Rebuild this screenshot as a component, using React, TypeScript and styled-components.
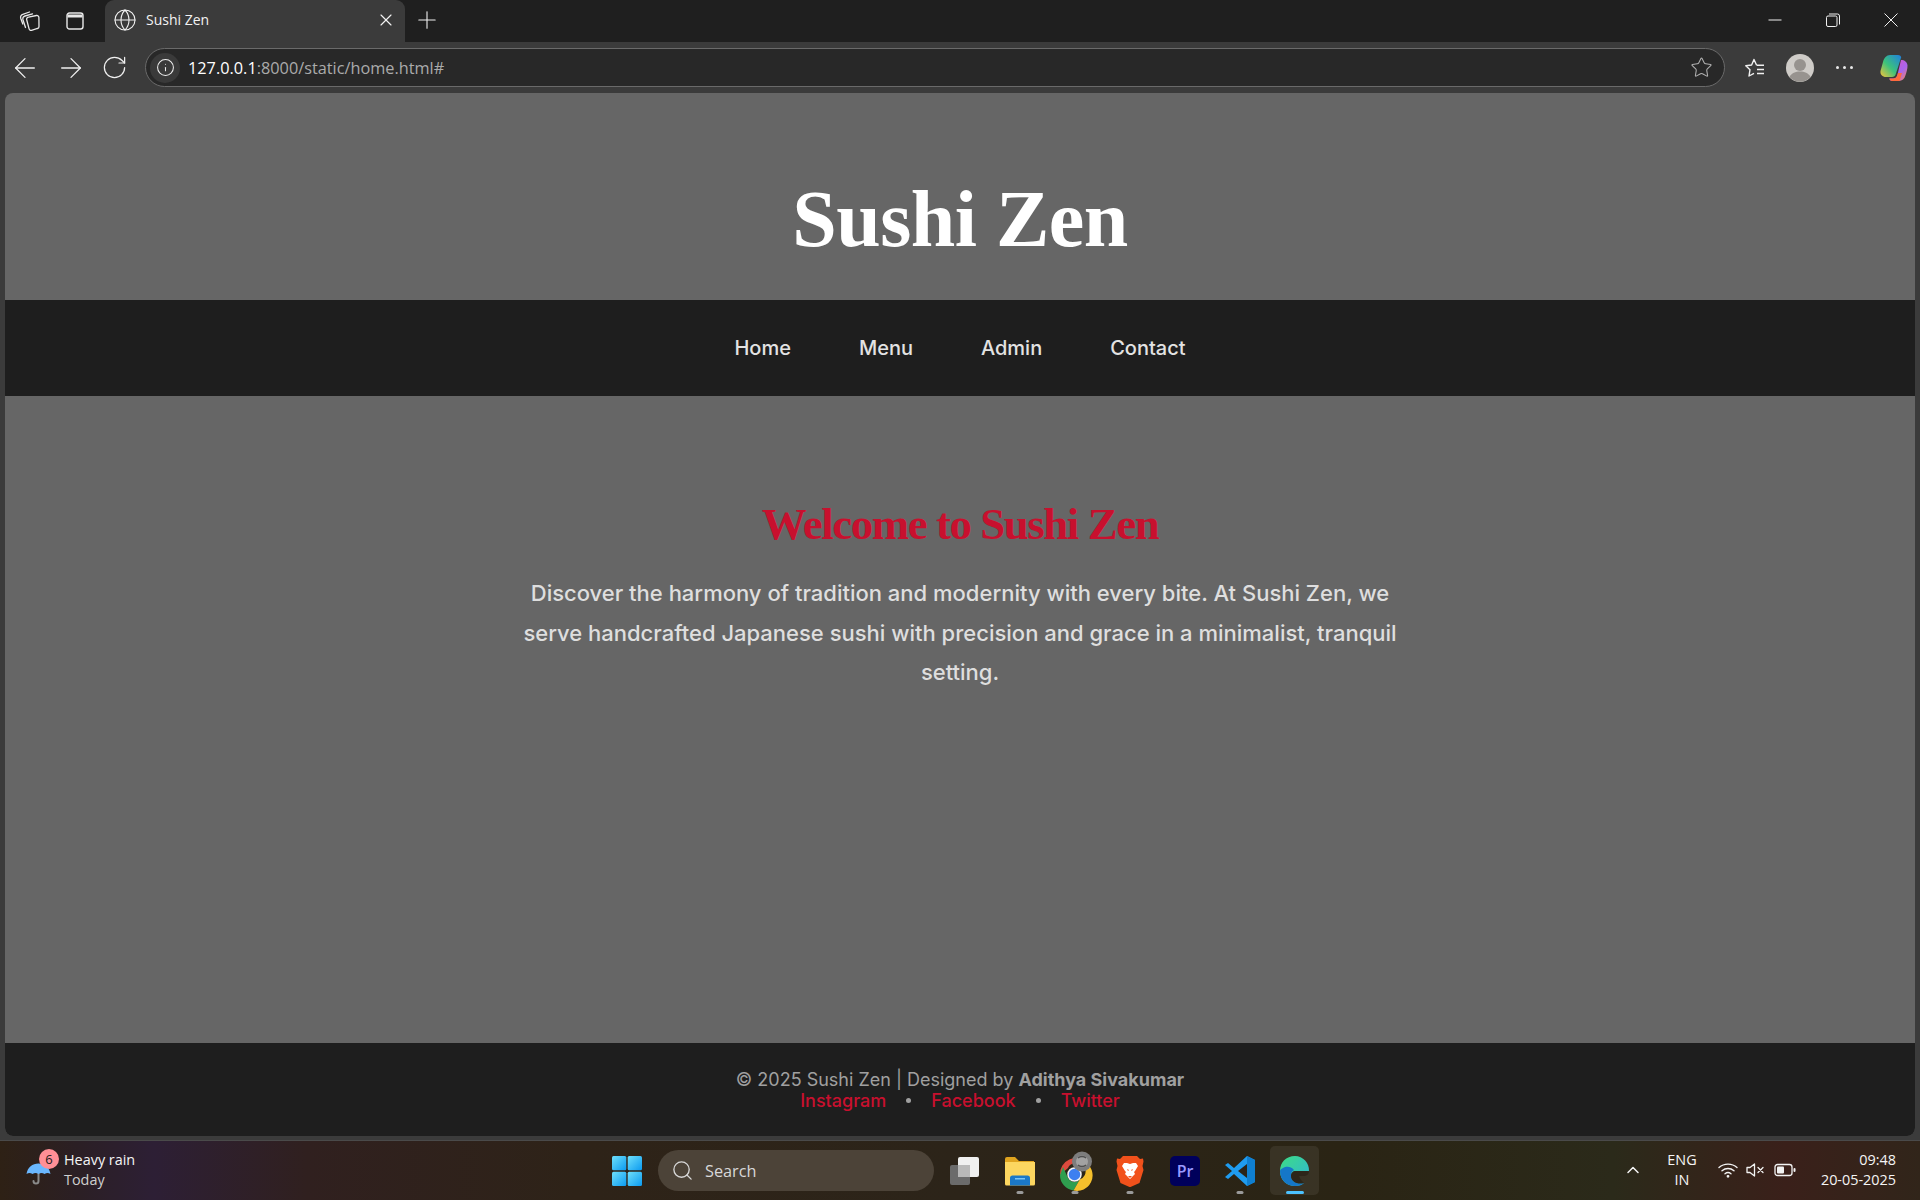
import React, { FC } from 'react'
import styled, { createGlobalStyle } from 'styled-components'
import { ArrowLeft, ArrowRight, ChevronUp, Globe, Info, Plus, RotateCw, Search, Star, X } from 'lucide-react'

const GlobalStyle = createGlobalStyle`
    html, body {
        margin: 0;
        padding: 0;
        height: 100%;
        overflow: hidden;
    }
    body {
        font-family: "Open Sans", "Noto Sans", sans-serif;
        background: #3b3b3b;
    }
    * {
        box-sizing: border-box;
    }
`

const Screen = styled.div`
    width: 1920px;
    height: 1200px;
    display: flex;
    flex-direction: column;
    overflow: hidden;
`

/* ---- browser chrome ---- */
const TabStrip = styled.div`
    height: 42px;
    flex: none;
    background: #1f1f1f;
    display: flex;
    align-items: stretch;
    color: #f0f0f0;
`
const StripIcons = styled.div`
    width: 105px;
    flex: none;
    display: flex;
    align-items: center;
    padding-left: 19px;
    gap: 25px;
`
const Tab = styled.div`
    width: 300px;
    flex: none;
    background: #3b3b3b;
    border-radius: 9px 9px 0 0;
    display: flex;
    align-items: center;
    padding: 0 9px 2px 8px;
    font-size: 14px;
    color: #f2f2f2;
`
const TabTitle = styled.span`
    flex: 1;
    margin: 0 0 2px 9px;
`
const NewTab = styled.div`
    width: 43px;
    flex: none;
    display: flex;
    align-items: center;
    justify-content: center;
    padding-bottom: 3px;
`
const WindowButtons = styled.div`
    margin-left: auto;
    display: flex;
    align-items: center;
    padding: 0 22px 2px 0;
    gap: 44px;
`

const Toolbar = styled.div`
    height: 51px;
    flex: none;
    background: #3b3b3b;
    display: flex;
    align-items: center;
    padding: 0 0 0 9px;
    color: #f0f0f0;
`
const NavIcons = styled.div`
    display: flex;
    align-items: center;
    gap: 14px;
    width: 136px;
    flex: none;
`
const AddressBar = styled.div`
    width: 1580px;
    height: 39px;
    flex: none;
    border: 1px solid #6a6a6a;
    border-radius: 20px;
    background: #282828;
    display: flex;
    align-items: center;
    padding: 0 11px 0 4px;
    font-size: 16.3px;
`
const InfoBadge = styled.div`
    width: 30px;
    height: 30px;
    border-radius: 50%;
    background: #3a3a3a;
    display: flex;
    align-items: center;
    justify-content: center;
    flex: none;
`
const Url = styled.span`
    flex: 1;
    margin-left: 8px;
    color: #ababab;
`
const Host = styled.span`
    color: #ffffff;
`
const ToolbarRight = styled.div`
    flex: 1;
    display: flex;
    align-items: center;
    gap: 20px;
    padding-left: 19px;
`
const Avatar = styled.div`
    width: 28px;
    height: 28px;
    flex: none;
`
const Dots = styled.div`
    display: flex;
    gap: 4px;
    width: 17px;
    flex: none;
    margin: 0 7px 0 2px;
    & > i {
        width: 3px;
        height: 3px;
        border-radius: 50%;
        background: #e8e8e8;
    }
`

/* ---- page ---- */
const Viewport = styled.div`
    flex: 1;
    min-height: 0;
    padding: 0 5px 4px;
    background: #3b3b3b;
`
const Page = styled.div`
    height: 100%;
    border-radius: 8px;
    overflow: hidden;
    background: #666666;
    display: flex;
    flex-direction: column;
`
const Header = styled.header`
    height: 207px;
    flex: none;
    display: flex;
    justify-content: center;
    padding-top: 95px;
`
const Title = styled.h1`
    margin: 0;
    font-family: "Liberation Serif", "DejaVu Serif", serif;
    font-weight: 700;
    font-size: 80px;
    line-height: 62px;
    letter-spacing: -0.5px;
    color: #ffffff;
`
const Nav = styled.nav`
    height: 96px;
    flex: none;
    background: #1e1e1e;
    display: flex;
    justify-content: center;
    align-items: center;
    gap: 68px;
`
const NavLink = styled.a`
    font-family: Inter, "Liberation Sans", sans-serif;
    font-weight: 500;
    font-size: 20px;
    color: #e3e3e3;
    text-decoration: none;
`
const Main = styled.main`
    flex: 1;
    display: flex;
    flex-direction: column;
    align-items: center;
    padding-top: 101px;
`
const Welcome = styled.h2`
    margin: 0;
    font-family: "Liberation Serif", serif;
    font-weight: 700;
    font-size: 44.8px;
    line-height: 54px;
    letter-spacing: -1.4px;
    color: #c8102e;
`
const Intro = styled.p`
    margin: 23px 0 0;
    width: 900px;
    text-align: center;
    font-family: Inter, "Liberation Sans", sans-serif;
    font-weight: 500;
    font-size: 22px;
    line-height: 39.6px;
    color: #dedede;
`
const Footer = styled.footer`
    height: 93px;
    flex: none;
    background: #1e1e1e;
    padding-top: 26px;
    text-align: center;
    font-family: Inter, "Liberation Sans", sans-serif;
    font-size: 18px;
    line-height: 21px;
    color: #a0a0a0;
`
const FooterLinks = styled.div`
    display: flex;
    justify-content: center;
    align-items: center;
    gap: 20px;
`
const FooterLink = styled.a`
    color: #c8102e;
    font-weight: 500;
    text-decoration: none;
`
const Bullet = styled.span`
    width: 5px;
    height: 5px;
    border-radius: 50%;
    background: #a0a0a0;
`

/* ---- taskbar ---- */
const Taskbar = styled.div`
    height: 60px;
    flex: none;
    border-top: 1px solid #4a4a4a;
    background: linear-gradient(90deg, #2e2115 0%, #2b1f24 4%, #2d1f35 8%, #30201f 16%, #2e2318 30%, #2c2419 50%, #2a2414 70%, #2b2a1a 84%, #3a201a 93%, #31251a 100%);
    display: grid;
    grid-template-columns: 1fr auto 1fr;
    align-items: center;
    color: #f5f5f5;
`
const Weather = styled.div`
    display: flex;
    align-items: center;
    padding: 0 0 2px 26px;
`
const WeatherIcon = styled.div`
    position: relative;
    width: 38px;
    height: 40px;
    flex: none;
    padding-top: 13px;
`
const Badge = styled.span`
    position: absolute;
    left: 13px;
    top: -1px;
    width: 20px;
    height: 20px;
    border-radius: 50%;
    background: #ff8f96;
    color: #1a1a1a;
    font-size: 13px;
    line-height: 20px;
    text-align: center;
`
const TwoLines = styled.div`
    font-size: 14.4px;
    line-height: 20px;
`
const Muted = styled.div`
    color: #cfcfcf;
`
const TaskCentre = styled.div`
    display: flex;
    align-items: center;
    height: 100%;
    padding-left: 14px;
`
const SearchBox = styled.div`
    width: 276px;
    height: 41px;
    border-radius: 21px;
    margin: 0 3px 0 16px;
    background: #4c4338;
    display: flex;
    align-items: center;
    padding-left: 13px;
    gap: 11px;
    font-size: 16.3px;
    color: #d8d8d8;
`
const AppSlot = styled.div<{ $open?: boolean; $active?: boolean }>`
    width: 55px;
    height: 49px;
    position: relative;
    display: flex;
    align-items: center;
    justify-content: center;
    &::before {
        content: '';
        display: ${p => (p.$active ? 'block' : 'none')};
        position: absolute;
        inset: 0 3px;
        border-radius: 5px;
        background: rgba(255, 255, 255, 0.07);
    }
    & > svg {
        position: relative;
    }
    &::after {
        content: '';
        display: ${p => (p.$open || p.$active ? 'block' : 'none')};
        position: absolute;
        bottom: 1px;
        left: 50%;
        transform: translateX(-50%);
        width: ${p => (p.$active ? '18px' : '7px')};
        height: 3px;
        border-radius: 2px;
        background: ${p => (p.$active ? '#4cc2ff' : '#9a9a9a')};
    }
`
const Tray = styled.div`
    justify-self: end;
    display: flex;
    align-items: center;
    padding: 0 24px 2px 0;
    font-size: 14.4px;
    line-height: 20px;
`
const Lang = styled.div`
    text-align: center;
    width: 44px;
    margin-left: 17px;
`
const TrayIcons = styled.div`
    display: flex;
    align-items: center;
    gap: 8px;
    margin-left: 14px;
`
const Clock = styled.div`
    text-align: right;
    margin-left: 18px;
    width: 82px;
`

const WorkspacesIcon: FC = () => (
    <svg width="22" height="22" viewBox="0 0 22 22" fill="none" stroke="#e8e8e8" strokeWidth="1.3" strokeLinecap="round">
        <path d="M9.500 7.200 17.500 5.500a2 2 0 0 1 2.400 2L20 16.500a2 2 0 0 1-1.500 2L12.500 20.300A2 2 0 0 1 10 18.500L7.700 9.800a2 2 0 0 1 1.800-2.600Z" />
        <path d="M6.500 17.500 4 10C3.500 8 4.200 6.500 6 6l7.500-2.200" />
        <path d="M3.800 14 1.800 8.500C1.200 6.500 2 5 3.800 4.300L10.500 2" />
    </svg>
)
const TabsIcon: FC = () => (
    <svg width="18" height="18" viewBox="0 0 18 18" fill="none" stroke="#e8e8e8" strokeWidth="1.4">
        <rect x="1" y="1" width="16" height="16" rx="2.500" />
        <path d="M1.500 2.500h15V5.500h-15Z" fill="#e8e8e8" stroke="none" />
    </svg>
)
const MinimizeIcon: FC = () => (
    <svg width="14" height="14" viewBox="0 0 14 14"><rect x="0.500" y="6.500" width="13" height="1" fill="#f0f0f0" /></svg>
)
const RestoreIcon: FC = () => (
    <svg width="14" height="14" viewBox="0 0 14 14" fill="none" stroke="#f0f0f0" strokeWidth="1">
        <rect x="0.500" y="3" width="10.500" height="10.500" rx="1.500" />
        <path d="M3 1h8.500A2 2 0 0 1 13.500 3v8.500" />
    </svg>
)
const CloseIcon: FC = () => (
    <svg width="14" height="14" viewBox="0 0 14 14" fill="none" stroke="#f0f0f0" strokeWidth="1">
        <path d="M0.500 0.500l13 13M13.500 0.500l-13 13" />
    </svg>
)
const FavouritesIcon: FC = () => (
    <svg width="22" height="22" viewBox="0 0 22 22" fill="none" stroke="#f0f0f0" strokeWidth="1.400">
        <path d="M12.500 8 10 2.500 7.600 8 1.800 8.800 6 12.700 5 19l5-2.600" strokeLinejoin="round" />
        <path d="M12.500 8.200H20M13 12.500h7M13 16.500h7" />
    </svg>
)
const CopilotIcon: FC = () => (
    <svg width="28" height="28" viewBox="0 0 28 28">
        <defs>
            <linearGradient id="cpA" x1="0" y1="1" x2="1" y2="0">
                <stop offset="0" stopColor="#f5c33b" />
                <stop offset="0.45" stopColor="#3cc27b" />
                <stop offset="1" stopColor="#1f7fe0" />
            </linearGradient>
            <linearGradient id="cpB" x1="0" y1="0" x2="1" y2="1">
                <stop offset="0" stopColor="#e84fb0" />
                <stop offset="0.6" stopColor="#a765f0" />
                <stop offset="1" stopColor="#ff8a4a" />
            </linearGradient>
        </defs>
        <path d="M10 1h8c1.600 0 2.700.7 3.200 2.200l-5.500 17c-.6 1.800-1.700 2.800-3.700 2.800H6C2.500 23 0 20.500.5 17L3 8C4 4 6.500 1 10 1Z" fill="url(#cpA)" />
        <path d="M21 6c3.500 0 6.300 2 6.500 5.500.1 3-1 7-2 9.800C24.500 25 22 27 19 27h-7c-1.500 0-2.500-1.200-2.700-2.500h4c2 0 3.300-1 4-3L21 6Z" fill="url(#cpB)" />
        <path d="M9.500 24.500h3.700c2 0 3.300-1 4-3l.8-2.500h4l-2.500 8H12c-1.500 0-2.300-1.200-2.500-2.500Z" fill="#ff6a3c" />
    </svg>
)
const UmbrellaIcon: FC = () => (
    <svg width="25" height="22" viewBox="0 0 25 22">
        <path d="M12.500 9v9a2.500 2.500 0 0 1-5 0" fill="none" stroke="#8a8a8a" strokeWidth="2" strokeLinecap="round" />
        <path d="M0.500 11C1.500 4.500 6.500 0.500 12.500 0.500S23.500 4.500 24.500 11c-2-1.400-4-1.400-6 0-2-1.400-4-1.400-6 0-2-1.400-4-1.400-6 0-2-1.400-4-1.400-6 0Z" fill="#6ab7ff" />
    </svg>
)
const WindowsLogo: FC = () => (
    <svg width="30" height="30" viewBox="0 0 30 30">
        <defs>
            <linearGradient id="winL" x1="0" y1="0" x2="1" y2="1">
                <stop offset="0" stopColor="#6fe0fb" />
                <stop offset="1" stopColor="#0b9af0" />
            </linearGradient>
        </defs>
        <rect x="0" y="0" width="14.300" height="14.300" rx="1.500" fill="url(#winL)" />
        <rect x="15.700" y="0" width="14.300" height="14.300" rx="1.500" fill="url(#winL)" />
        <rect x="0" y="15.700" width="14.300" height="14.300" rx="1.500" fill="url(#winL)" />
        <rect x="15.700" y="15.700" width="14.300" height="14.300" rx="1.500" fill="url(#winL)" />
    </svg>
)
const TaskViewIcon: FC = () => (
    <svg width="32" height="30" viewBox="0 0 32 30">
        <rect x="9" y="1" width="21" height="20" rx="2" fill="#f0f0f0" />
        <rect x="1" y="9" width="20" height="20" rx="2" fill="#6b6b6b" />
        <rect x="9" y="9" width="12" height="12" fill="#b9b9b9" />
    </svg>
)
const FolderIcon: FC = () => (
    <svg width="32" height="30" viewBox="0 0 32 30">
        <path d="M1 3a2 2 0 0 1 2-2h8l4 4h15v4H1Z" fill="#e0a41f" />
        <path d="M1 6h30v22a1.500 1.500 0 0 1-1.500 1.500h-27A1.500 1.500 0 0 1 1 28Z" fill="#fcd660" />
        <path d="M6 29.500V22a2.500 2.500 0 0 1 2.500-2.500h15A2.500 2.500 0 0 1 26 22v7.500Z" fill="#1b78c8" />
        <rect x="11" y="22" width="10" height="1.500" fill="#7cc4f5" />
    </svg>
)
const ChromeIcon: FC = () => (
    <svg width="44" height="44" viewBox="0 0 44 44">
        <path d="M7 26a15.500 15.500 0 0 1 27-11.500H21.500a7 7 0 0 0-6.500 4.500Z" fill="#dd4b3e" />
        <path d="M7 26a15.500 15.500 0 0 0 13.500 15.500l6.300-11a7 7 0 0 1-11.800-1.500L10 18Z" fill="#2f9e4f" />
        <path d="M20.500 41.500A15.500 15.500 0 0 0 34 14.500H21.500a7 7 0 0 1 5.300 16Z" fill="#f6c02c" />
        <circle cx="21.500" cy="25.500" r="6.500" fill="#3d7ff0" stroke="#f4f4f4" strokeWidth="1.500" />
        <circle cx="29" cy="12.500" r="10" fill="#7d7d7d" />
        <circle cx="29" cy="12.500" r="6" fill="#a2a2a2" />
        <path d="M25 9c2-2 6-2 8 0M25 16c2 2 6 2 8 0" stroke="#4f4f4f" strokeWidth="1.500" fill="none" />
    </svg>
)
const BraveIcon: FC = () => (
    <svg width="28" height="32" viewBox="0 0 28 32">
        <path d="M7 1h14l3 3 3-.500.500 3L26.500 11l1 4-4 13-9 4-1 0-9-4-4-13 1-4L.5 6.500 1 3.500l3 .5Z" fill="#f1511b" />
        <path d="M8 8h3l3 1 3-1h3l2 3-3 5-1 1 1 2-2 2-3 3-3-3-2-2 1-2-1-1-3-5Z" fill="#fff" />
        <path d="M11 14l2 1-1 1ZM17 14l-2 1 1 1ZM12 21h4l-2 2Z" fill="#f1511b" />
    </svg>
)
const PremiereIcon: FC = () => (
    <svg width="30" height="30" viewBox="0 0 30 30">
        <rect width="30" height="30" rx="5" fill="#00005b" />
        <text x="15" y="21" textAnchor="middle" fontFamily="Open Sans, sans-serif" fontWeight="600" fontSize="16" fill="#9999ff">Pr</text>
    </svg>
)
const VsCodeIcon: FC = () => (
    <svg width="32" height="32" viewBox="0 0 32 32">
        <path d="M23 1 31 5v22l-8 4L10 19l-6 5-3-2 7-6-7-6 3-2 6 5Z" fill="#1f9cf0" />
        <path d="M23 1 31 5v22l-8 4Z" fill="#0f7fd0" />
        <path d="M23 9l-9 7 9 7Z" fill="#2b2419" />
    </svg>
)
const EdgeIcon: FC = () => (
    <svg width="32" height="32" viewBox="0 0 32 32">
        <defs>
            <linearGradient id="edgeG" x1="0" y1="0" x2="1" y2="1">
                <stop offset="0" stopColor="#3ddc84" />
                <stop offset="1" stopColor="#2fb5d8" />
            </linearGradient>
        </defs>
        <path d="M16 1C7 1 1 7.500 1 16c0 9 7 15 15 15 4 0 7-1 9-3-6 2-13-1-13-7 0-3 2-5 5-5h13c.5-8-6-15-14-15Z" fill="url(#edgeG)" />
        <path d="M1 16c0 9 7 15 15 15 4 0 7-1 9-3-6 2-13-1-13-7 0-3 1-5 3-6-3-4-8-4-11-2-2 1-3 2-3 3Z" fill="#1577c8" />
        <path d="M12 21c0-3 2-5 5-5h13c0 3-2 5-6 5h-4c1 3 3 5 5 7-6 2-13-1-13-7Z" fill="#2b2419" opacity="0.85" />
    </svg>
)
const WifiIcon: FC = () => (
    <svg width="20" height="16" viewBox="0 0 20 16" fill="none" stroke="#f2f2f2" strokeWidth="1.400" strokeLinecap="round">
        <path d="M1 5.500C6 1 14 1 19 5.500" />
        <path d="M4 8.700C7.500 5.700 12.500 5.700 16 8.700" />
        <path d="M7 11.700C8.800 10.300 11.200 10.300 13 11.700" />
        <circle cx="10" cy="14.300" r="0.700" fill="#f2f2f2" />
    </svg>
)
const MutedIcon: FC = () => (
    <svg width="20" height="16" viewBox="0 0 20 16" fill="none" stroke="#f2f2f2" strokeWidth="1.300" strokeLinejoin="round">
        <path d="M1 5.500h3L8.500 2v12L4 10.500H1Z" />
        <path d="M12 5.500l5 5M17 5.500l-5 5" strokeLinecap="round" />
    </svg>
)
const BatteryIcon: FC = () => (
    <svg width="22" height="14" viewBox="0 0 22 14" fill="none">
        <rect x="1" y="1.500" width="17" height="11" rx="2.500" stroke="#f2f2f2" strokeWidth="1.300" />
        <rect x="3" y="3.500" width="7" height="7" rx="1" fill="#f2f2f2" />
        <rect x="19.500" y="5" width="2" height="4" rx="1" fill="#f2f2f2" />
    </svg>
)

const App: FC = () => {
    const navItems = ['Home', 'Menu', 'Admin', 'Contact']
    return (
        <Screen>
            <GlobalStyle />
            <TabStrip>
                <StripIcons>
                    <WorkspacesIcon />
                    <TabsIcon />
                </StripIcons>
                <Tab>
                    <Globe size={24} strokeWidth={1.1} />
                    <TabTitle>Sushi Zen</TabTitle>
                    <X size={20} strokeWidth={1.4} />
                </Tab>
                <NewTab>
                    <Plus size={28} strokeWidth={0.95} />
                </NewTab>
                <WindowButtons>
                    <MinimizeIcon />
                    <RestoreIcon />
                    <CloseIcon />
                </WindowButtons>
            </TabStrip>
            <Toolbar>
                <NavIcons>
                    <ArrowLeft size={32} strokeWidth={0.95} />
                    <ArrowRight size={32} strokeWidth={0.95} />
                    <RotateCw size={27} strokeWidth={1.1} />
                </NavIcons>
                <AddressBar>
                    <InfoBadge>
                        <Info size={19} strokeWidth={1.3} />
                    </InfoBadge>
                    <Url>
                        <Host>127.0.0.1</Host>:8000/static/home.html#
                    </Url>
                    <Star size={23} strokeWidth={1.1} color="#b0b0b0" />
                </AddressBar>
                <ToolbarRight>
                    <FavouritesIcon />
                    <Avatar>
                        <svg width="28" height="28" viewBox="0 0 28 28">
                            <circle cx="14" cy="14" r="14" fill="#cfccc8" />
                            <circle cx="14" cy="11" r="6" fill="#97938f" />
                            <path d="M3.500 23c2-4 6-5.500 10.500-5.500S22.500 19 24.500 23A14 14 0 0 1 3.500 23Z" fill="#97938f" />
                        </svg>
                    </Avatar>
                    <Dots><i /><i /><i /></Dots>
                    <CopilotIcon />
                </ToolbarRight>
            </Toolbar>
            <Viewport>
                <Page>
                    <Header>
                        <Title>Sushi Zen</Title>
                    </Header>
                    <Nav>
                        {navItems.map(item => (
                            <NavLink key={item} href="#">{item}</NavLink>
                        ))}
                    </Nav>
                    <Main>
                        <Welcome>Welcome to Sushi Zen</Welcome>
                        <Intro>
                            Discover the harmony of tradition and modernity with every bite. At Sushi Zen, we serve handcrafted Japanese sushi with precision and grace in a minimalist, tranquil setting.
                        </Intro>
                    </Main>
                    <Footer>
                        <div>© 2025 Sushi Zen | Designed by <strong>Adithya Sivakumar</strong></div>
                        <FooterLinks>
                            <FooterLink href="#">Instagram</FooterLink>
                            <Bullet />
                            <FooterLink href="#">Facebook</FooterLink>
                            <Bullet />
                            <FooterLink href="#">Twitter</FooterLink>
                        </FooterLinks>
                    </Footer>
                </Page>
            </Viewport>
            <Taskbar>
                <Weather>
                    <WeatherIcon>
                        <UmbrellaIcon />
                        <Badge>6</Badge>
                    </WeatherIcon>
                    <TwoLines>
                        <div>Heavy rain</div>
                        <Muted>Today</Muted>
                    </TwoLines>
                </Weather>
                <TaskCentre>
                    <WindowsLogo />
                    <SearchBox>
                        <Search size={23} strokeWidth={1.4} />
                        Search
                    </SearchBox>
                    <AppSlot><TaskViewIcon /></AppSlot>
                    <AppSlot $open><FolderIcon /></AppSlot>
                    <AppSlot $open><ChromeIcon /></AppSlot>
                    <AppSlot $open><BraveIcon /></AppSlot>
                    <AppSlot><PremiereIcon /></AppSlot>
                    <AppSlot $open><VsCodeIcon /></AppSlot>
                    <AppSlot $active><EdgeIcon /></AppSlot>
                </TaskCentre>
                <Tray>
                    <ChevronUp size={20} strokeWidth={1.8} />
                    <Lang>ENG<br />IN</Lang>
                    <TrayIcons>
                        <WifiIcon />
                        <MutedIcon />
                        <BatteryIcon />
                    </TrayIcons>
                    <Clock>09:48<br />20-05-2025</Clock>
                </Tray>
            </Taskbar>
        </Screen>
    )
}

export default App
